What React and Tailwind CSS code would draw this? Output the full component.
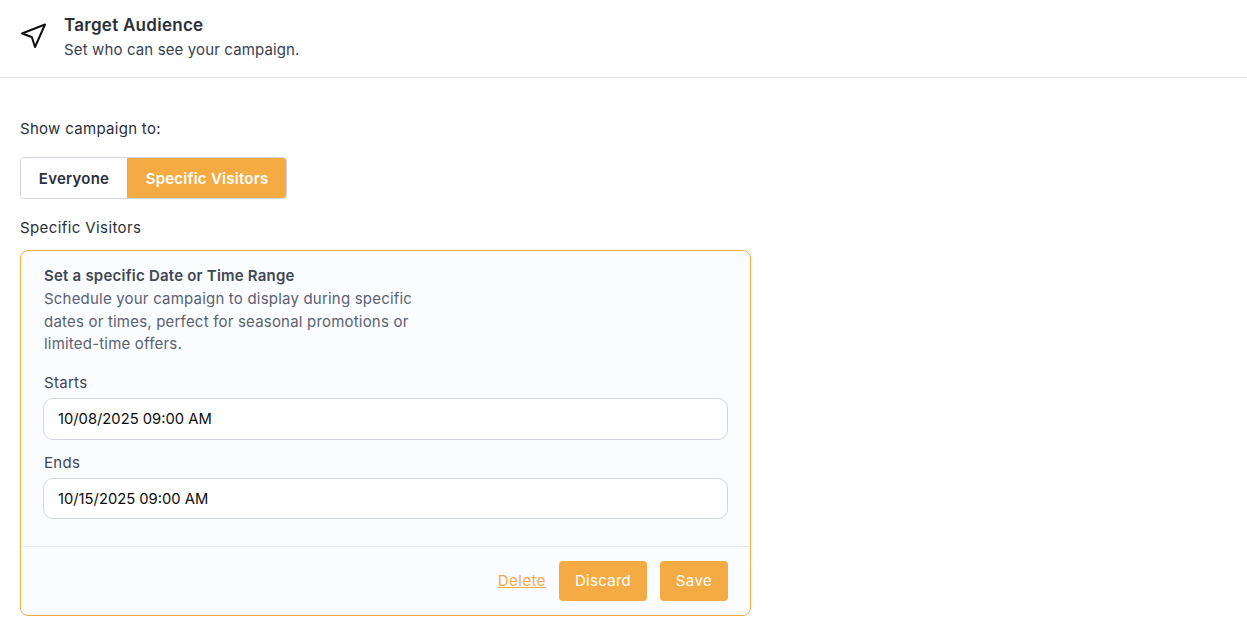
import React from "react";

function Field({ label, value, className, inputHeight }) {
  return (
    <div className={className}>
      <div className="ml-[1px] text-[15px] tracking-[0.3px] leading-[22px] text-[#3f4656] mb-[4px]">{label}</div>
      <div className={`${inputHeight} rounded-[10px] border border-[#d0d5e0] bg-white px-[14px] pt-[2px] flex items-center text-[14.75px] text-[#0c0c0c]`}>
        {value}
      </div>
    </div>
  );
}

export default function App() {
  return (
    <div className="w-[1247px] h-[635px] bg-white overflow-hidden font-[Inter,sans-serif]">
      <header className="h-[78px] border-b border-[#e5e7eb] pl-[20px] flex items-start">
        <svg className="mt-[23px] w-[26px] h-[26px]" viewBox="0 0 26 26" fill="none" stroke="#0f0f10" strokeWidth="2" strokeLinejoin="round" strokeLinecap="round">
          <path d="M2 10.5 25 1.5 15 24 11.8 14z" />
        </svg>
        <div className="ml-[18px] pt-[13px]">
          <div className="text-[17px] tracking-[0.27px] leading-[24px] font-semibold text-[#2a2f3a]">Target Audience</div>
          <div className="pt-[1px] text-[15px] tracking-[0.13px] leading-[24px] text-[#3a4150]">Set who can see your campaign.</div>
        </div>
      </header>
      <main className="px-[20px] pt-[40px]">
        <div className="text-[15px] tracking-[0.3px] leading-[22px] text-[#2a2f3a]">Show campaign to:</div>
        <div className="mt-[17px] flex w-[267px] h-[42px] rounded-[4px] border border-[#d0d5e0] overflow-hidden text-[15px] tracking-[0.25px] font-semibold">
          <div className="w-[106px] pt-[2px] flex items-center justify-center text-[#2a2f3a] bg-white">Everyone</div>
          <div className="flex-1 pt-[2px] pl-[1px] flex items-center justify-center text-white bg-[#f4ab44]">Specific Visitors</div>
        </div>
        <div className="mt-[18px] text-[15px] tracking-[0.4px] leading-[22px] text-[#2a2f3a]">Specific Visitors</div>
        <section className="mt-[11px] w-[731px] h-[366px] rounded-[8px] border border-[#f4ab44] bg-[#fbfcff] flex flex-col">
          <div className="flex-1 px-[22px] pt-[14px]">
            <div className="ml-[1px] -mt-[1px] pb-[1px] text-[15px] tracking-[0.22px] leading-[23px] font-semibold text-[#3f4656]">Set a specific Date or Time Range</div>
            <p className="ml-[1px] w-[400px] text-[15px] tracking-[0.2px] leading-[22.5px] text-[#5a6172]">
              Schedule your campaign to display during specific dates or times, perfect for seasonal promotions or limited-time offers.
            </p>
            <Field className="mt-[16px]" inputHeight="h-[42px]" label="Starts" value="10/08/2025 09:00 AM" />
            <Field className="mt-[12px]" inputHeight="h-[41px]" label="Ends" value="10/15/2025 09:00 AM" />
          </div>
          <div className="h-[69px] border-t border-[#e5e7eb] flex items-center justify-end pr-[22px] text-[15px]">
            <span className="underline tracking-[0.45px] text-[#f4ab44] mr-[13px]">Delete</span>
            <div className="w-[88px] h-[40px] rounded-[4px] tracking-[0.3px] bg-[#f4ab44] text-white flex items-center justify-center">Discard</div>
            <div className="ml-[13px] w-[68px] h-[40px] rounded-[4px] tracking-[0.5px] bg-[#f4ab44] text-white flex items-center justify-center">Save</div>
          </div>
        </section>
      </main>
    </div>
  );
}
